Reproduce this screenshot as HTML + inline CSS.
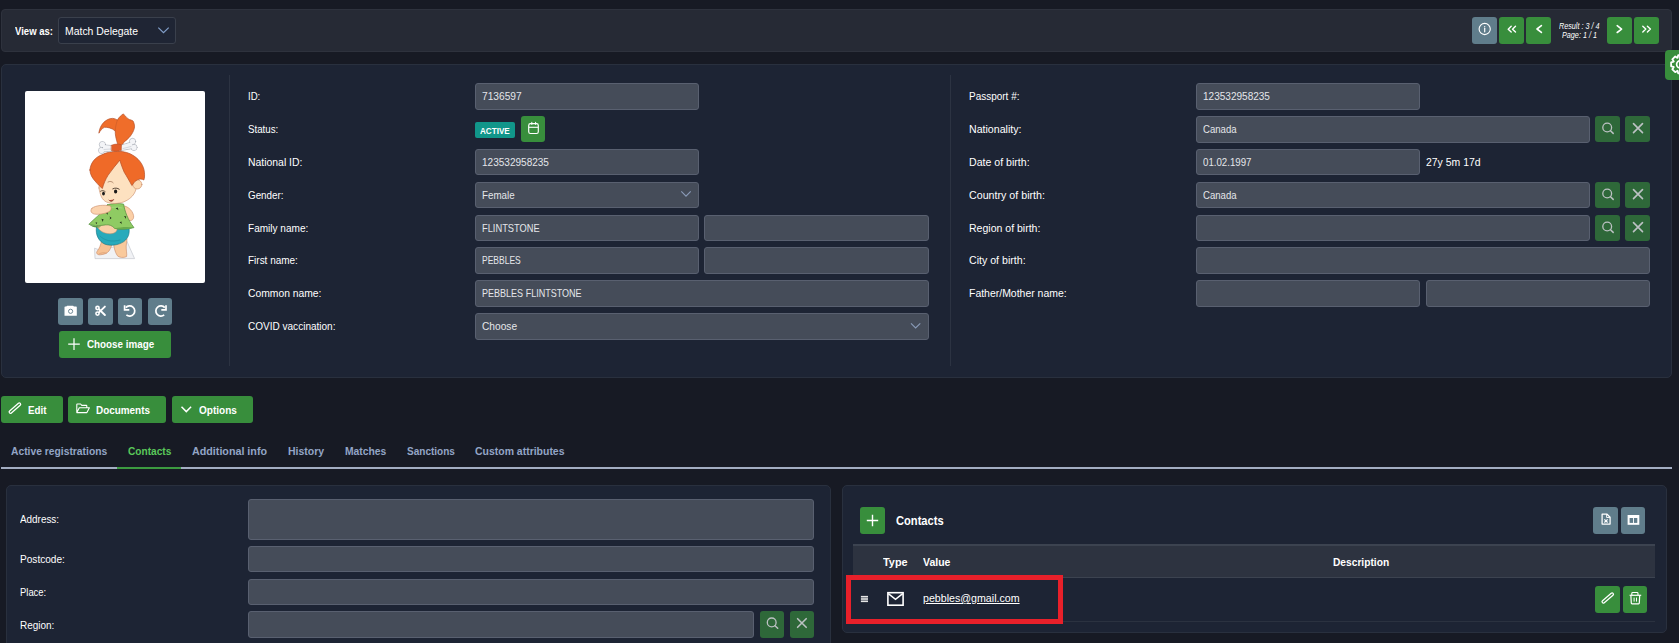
<!DOCTYPE html>
<html><head><meta charset="utf-8"><style>
html,body{margin:0;padding:0;width:1679px;height:643px;overflow:hidden;background:#171a24;font-family:"Liberation Sans",sans-serif;}
body>div,body>svg{position:absolute;}
.t{white-space:nowrap;}
</style></head><body>
<div style="left:1px;top:9px;width:1671px;height:43px;background:#262a35;border:1px solid #2e323d;border-radius:4px;box-sizing:border-box"></div>
<div class="t" style="left:15.00px;top:25px;font-size:11.34px;line-height:12px;font-weight:bold;color:#fff;transform:scaleX(0.8413);transform-origin:0 0;">View as:</div>
<div style="left:58px;top:17px;width:118px;height:27px;background:#1f2534;border:1px solid #3a404c;border-radius:3px;box-sizing:border-box"></div>
<div class="t" style="left:65.00px;top:25px;font-size:11.34px;line-height:12px;font-weight:normal;color:#fff;transform:scaleX(0.9206);transform-origin:0 0;">Match Delegate</div>
<svg style="left:157px;top:26px" width="13" height="9" viewBox="0 0 13 9"><path d="M1.3 1.6 L6.5 6.7 L11.7 1.6" stroke="#819ec9" stroke-width="1.2" fill="none"/></svg>
<div style="left:1472px;top:17px;width:25px;height:27px;background:#607d8b;border-radius:3px"></div>
<div style="left:1499px;top:17px;width:25px;height:27px;background:#388e3c;border-radius:3px"></div>
<div style="left:1526px;top:17px;width:25px;height:27px;background:#388e3c;border-radius:3px"></div>
<div style="left:1607px;top:17px;width:25px;height:27px;background:#388e3c;border-radius:3px"></div>
<div style="left:1634px;top:17px;width:25px;height:27px;background:#388e3c;border-radius:3px"></div>
<div class="t" style="left:1559.00px;top:21px;font-size:8.72px;line-height:10px;font-weight:normal;color:#fff;transform:scaleX(0.8272);transform-origin:0 0;font-style:italic">Result : 3 / 4</div>
<div class="t" style="left:1562.00px;top:30px;font-size:8.72px;line-height:10px;font-weight:normal;color:#fff;transform:scaleX(0.8297);transform-origin:0 0;font-style:italic">Page: 1 / 1</div>
<div style="left:1px;top:64px;width:1671px;height:314px;background:#1d2434;border:1px solid #29303e;border-radius:5px;box-sizing:border-box"></div>
<div style="left:25px;top:91px;width:180px;height:192px;background:#fff;border-radius:2px"></div>
<svg style="left:25px;top:91px" width="180" height="192" viewBox="25 91 180 192">
<g stroke-linejoin="round" stroke-linecap="round">
<!-- stand base -->
<path d="M94.6 248.5 L95 258.6 L134.6 258.6 L126.5 240.4 L118 246 L100 250 Z" fill="#f1f2f5" stroke="#c4c7cf" stroke-width="0.7"/>
<!-- legs -->
<path d="M101.5 240 C101 245 99.5 248 97 251.5 C95.8 253.2 97.5 255 100.2 254.8 C104 254.5 107 253.5 109 251 C111 248 112.5 244 112.5 240 Z" fill="#f7c193" stroke="#c98a66" stroke-width="0.6"/>
<path d="M113.5 241 C113.5 247 115 252 117.2 255.5 C118.8 257.8 124 258 126.6 256.6 C127.2 254 126 250 126.2 246 C126.4 243 127 241 127 239 Z" fill="#f9c99c" stroke="#c98a66" stroke-width="0.6"/>
<path d="M99 254 C101 252.5 104.5 252.5 106.5 253.2" stroke="#c98a66" stroke-width="0.5" fill="none"/>
<!-- diaper -->
<path d="M96.4 227.4 C95.3 235 98.8 241.5 105 244.2 C111 246.2 118.2 245.2 123.8 241.6 C128.3 238 129.8 234 129 227.5 C118 230 106 230 96.4 227.4 Z" fill="#28aabb" stroke="#17707f" stroke-width="0.6"/>
<path d="M100 236 C104 240.5 112 242.5 120 240" stroke="#1c8595" stroke-width="0.8" fill="none" opacity="0.6"/>
<!-- belly -->
<path d="M97 224.5 C97.5 229.8 103 233.6 110 233.8 C114.5 233.8 117.2 231.6 117.2 228.6 L114 223.5 L99 223 Z" fill="#fbd0a8" stroke="#c98a66" stroke-width="0.5"/>
<!-- right arm -->
<path d="M120.5 205.6 C126.8 205 132.4 209.8 133.6 215.6 C134.2 219.8 131 222 127.4 219.8 C124.8 216.2 122.4 213.2 119.8 210.6 Z" fill="#fbcfa6" stroke="#c98a66" stroke-width="0.6"/>
<!-- dress -->
<path d="M107.5 204.8 C112.5 203.3 119 203.1 123.6 204.1 C124.8 211.5 128 220 134 227.6 C127.5 229.6 120 229.8 114.6 228.4 C112.4 225.6 109 224.4 105.4 224.9 C101 225.6 96.4 226 92.8 225.2 C90.8 224.8 89.6 224.6 88.8 224.3 C92.5 220.5 96.8 217 100.5 213.5 C103.5 210.6 105.8 207.8 107.5 204.8 Z" fill="#8fcb63" stroke="#4c8838" stroke-width="0.65"/>
<path d="M88.8 224.3 C92.4 227.4 97.4 228.7 101.2 226.4 C96.6 226.4 92.4 225.8 88.8 224.3 Z" fill="#5a9a40"/>
<path d="M114.6 228.4 C119.6 229.8 127.4 229.8 134 227.6 C128 226.4 121 226.8 114.6 228.4 Z" fill="#6aab4c"/>
<path d="M109 208 C113 207 118 207 122 208" stroke="#a5d97e" stroke-width="1.2" fill="none" opacity="0.7"/>
<g fill="#1d2916">
<path d="M115.6 208.6 l2 -1.2 l0.9 2.8 l-1.4 -0.9 z"/>
<path d="M105.6 213 l2.2 -1 l-0.3 2.9 l-0.7 -1.3 z"/>
<path d="M101.4 218.8 l2.3 0.8 l-1.5 2.3 l0 -1.5 z"/>
<path d="M109.6 216.6 l2 1.5 l-2 1.4 l0.5 -1.4 z"/>
<path d="M124 216 l2.2 0.5 l-0.8 2.4 l-0.3 -1.5 z"/>
<path d="M119.6 222.2 l1.9 -0.8 l0 2.8 l-0.8 -1.2 z"/>
<path d="M95.5 222.4 l1.8 0.2 l-1 1.6 z"/>
</g>
<!-- left arm / hand -->
<path d="M92 208.2 C96 205 104 204.8 110 205.8 C112.2 207.8 111.2 211 108 212.2 C103 214.2 96 215 93 213.6 C90.4 212.2 90.4 209.6 92 208.2 Z" fill="#fbd3ae" stroke="#c98a66" stroke-width="0.6"/>
<!-- ponytail -->
<path d="M117.5 143.5 C116 139 115 134 115.3 131 C112 128 107 127 104.4 127.3 C102 128.5 100 131 98.9 133.2 C99.5 128 102 122.5 107.6 119.6 C111 117.8 114.5 118 117.4 120.1 C119 117 121.5 115 123.4 113.9 C125.5 116.5 127.5 118.5 129.4 119.6 C131 120 132.5 120.5 133.2 121.2 C134.5 124 134.8 126.5 134.3 128.3 C133.5 131.5 132 133.8 130.5 135.9 C128.5 138.5 126 140.5 124 142 L121 147 Z" fill="#ef6d2a" stroke="#b5502a" stroke-width="0.7"/>
<path d="M117.4 120.1 C116 124 115.3 128 115.3 131" stroke="#c85a28" stroke-width="0.6" fill="none"/>
<!-- face -->
<path d="M99 188 C98.5 178 104 166 119 160 C130 163 135.5 172 136.5 182 C137.5 191 133 198 124 201.8 C118 204 111.5 204 106.5 202 C102 200 100 195 99 188 Z" fill="#fde1c0" stroke="#c98a66" stroke-width="0.6"/>
<!-- ear -->
<circle cx="137.3" cy="184.4" r="4.6" fill="#fcd8b2" stroke="#c98a66" stroke-width="0.6"/>
<!-- hair -->
<path d="M89.9 170 C90.5 163 95 157.5 101.3 155 C106 152.5 112 151.3 117.7 151.3 C124 151.3 130 153 134 156 C140 160 143.8 166 144.4 172.2 C144.8 176 144.5 178.5 143.8 180 C142 178.8 139.5 178.8 137.5 179.8 C135.5 180.8 133.5 182.5 132.9 184.5 L131.8 185.5 C129.5 181 126.5 176 124.2 172.2 C122.5 168.5 121 164 119.8 160.2 C116 165 111.5 170 107.9 175.5 C105.5 179.5 103.5 184 102.4 188.5 C100 186.5 97.5 184 95.9 182 C92.5 178.5 90 174.5 89.9 170 Z" fill="#ef6a28" stroke="#b5502a" stroke-width="0.7"/>
<!-- bone -->
<g fill="#f3f4f7" stroke="#9ea3ad" stroke-width="0.6">
<circle cx="102.4" cy="144.6" r="3.1"/>
<circle cx="101.6" cy="150.4" r="3.1"/>
<circle cx="132.6" cy="141.4" r="3.1"/>
<circle cx="134.0" cy="147.4" r="3.1"/>
<path d="M103 144.8 L112 145.6 L112 151.2 L103 151.8 Z"/>
<path d="M121 145.2 L131.8 141.8 L133.2 148.4 L121 150.6 Z"/>
</g>
<path d="M103.5 145.3 L112 146.1 L112 150.7 L103.5 151.3 Z M121 145.7 L131.8 142.4 L133 147.8 L121 150.1 Z" fill="#f3f4f7"/>
<circle cx="102.4" cy="144.6" r="2.5" fill="#f3f4f7"/><circle cx="101.6" cy="150.4" r="2.5" fill="#f3f4f7"/><circle cx="132.6" cy="141.4" r="2.5" fill="#f3f4f7"/><circle cx="134.0" cy="147.4" r="2.5" fill="#f3f4f7"/>
<path d="M104 149.5 L111 149 M123 148.5 L131 146.5" stroke="#d5d8de" stroke-width="1" fill="none"/>
<path d="M111.5 145.2 C114.5 143.8 118.5 143.6 121.5 144.8 L121.3 150.3 C118 151.5 114.5 151.5 111.5 150.5 Z" fill="#e35f28" stroke="#b04a22" stroke-width="0.5"/>
<!-- eyes -->
<ellipse cx="103.5" cy="193.6" rx="1.4" ry="1.9" fill="#1a1a1a"/>
<ellipse cx="115.6" cy="191.4" rx="1.6" ry="2" fill="#1a1a1a"/>
<path d="M108 182 C110 181 112 181.3 113.2 182.8" stroke="#8a5a40" stroke-width="0.6" fill="none"/>
<path d="M112.8 188.8 C115 187.6 117.5 188 119.2 189.2" stroke="#2a1a10" stroke-width="0.8" fill="none"/>
<path d="M100.5 191.2 C102 190.2 104 190.6 105.2 191.6" stroke="#2a1a10" stroke-width="0.7" fill="none"/>
<!-- mouth -->
<path d="M109 200.2 C110.5 201.8 112.6 201.8 113.6 199.6" stroke="#7a3020" stroke-width="0.8" fill="#c05040"/>
</g>
</svg>

<div style="left:58px;top:298px;width:25px;height:27px;background:#607d8b;border-radius:3px"></div>
<div style="left:88px;top:298px;width:25px;height:27px;background:#607d8b;border-radius:3px"></div>
<div style="left:118px;top:298px;width:24px;height:27px;background:#607d8b;border-radius:3px"></div>
<div style="left:148px;top:298px;width:24px;height:27px;background:#607d8b;border-radius:3px"></div>
<div style="left:59px;top:331px;width:112px;height:27px;background:#388e3c;border-radius:3px"></div>
<div class="t" style="left:86.70px;top:338px;font-size:11.48px;line-height:12px;font-weight:bold;color:#fff;transform:scaleX(0.8575);transform-origin:0 0;">Choose image</div>
<div style="left:229px;top:75px;width:1px;height:291px;background:#2c3342"></div>
<div style="left:950px;top:75px;width:1px;height:291px;background:#2c3342"></div>
<div class="t" style="left:247.70px;top:89px;font-size:11.63px;line-height:13px;font-weight:normal;color:#fff;transform:scaleX(0.8277);transform-origin:0 0;">ID:</div>
<div class="t" style="left:247.70px;top:122px;font-size:11.63px;line-height:13px;font-weight:normal;color:#fff;transform:scaleX(0.8371);transform-origin:0 0;">Status:</div>
<div class="t" style="left:247.70px;top:155px;font-size:11.63px;line-height:13px;font-weight:normal;color:#fff;transform:scaleX(0.8954);transform-origin:0 0;">National ID:</div>
<div class="t" style="left:247.70px;top:188px;font-size:11.63px;line-height:13px;font-weight:normal;color:#fff;transform:scaleX(0.8450);transform-origin:0 0;">Gender:</div>
<div class="t" style="left:247.70px;top:221px;font-size:11.63px;line-height:13px;font-weight:normal;color:#fff;transform:scaleX(0.8640);transform-origin:0 0;">Family name:</div>
<div class="t" style="left:247.70px;top:253px;font-size:11.63px;line-height:13px;font-weight:normal;color:#fff;transform:scaleX(0.8581);transform-origin:0 0;">First name:</div>
<div class="t" style="left:247.70px;top:286px;font-size:11.63px;line-height:13px;font-weight:normal;color:#fff;transform:scaleX(0.8885);transform-origin:0 0;">Common name:</div>
<div class="t" style="left:247.70px;top:319px;font-size:11.63px;line-height:13px;font-weight:normal;color:#fff;transform:scaleX(0.8624);transform-origin:0 0;">COVID vaccination:</div>
<div style="left:475px;top:83.1px;width:224px;height:26.599999999999994px;background:#454c59;border:1px solid #596070;border-radius:3px;box-sizing:border-box"></div>
<div class="t" style="left:481.50px;top:90px;font-size:11.34px;line-height:12px;font-weight:normal;color:#e4e6ea;transform:scaleX(0.8995);transform-origin:0 0;">7136597</div>
<div style="left:475px;top:122px;width:40px;height:16px;background:#11968a;border-radius:2px"></div>
<div class="t" style="left:480.00px;top:127px;font-size:8.28px;line-height:9px;font-weight:bold;color:#fff;transform:scaleX(0.9809);transform-origin:0 0;">ACTIVE</div>
<div style="left:521px;top:116px;width:24px;height:26px;background:#388e3c;border-radius:3px"></div>
<div style="left:475px;top:148.82px;width:224px;height:26.599999999999994px;background:#454c59;border:1px solid #596070;border-radius:3px;box-sizing:border-box"></div>
<div class="t" style="left:481.50px;top:156px;font-size:11.34px;line-height:12px;font-weight:normal;color:#e4e6ea;transform:scaleX(0.8855);transform-origin:0 0;">123532958235</div>
<div style="left:475px;top:181.68px;width:224px;height:26.599999999999994px;background:#454c59;border:1px solid #596070;border-radius:3px;box-sizing:border-box"></div>
<div class="t" style="left:481.50px;top:189px;font-size:11.34px;line-height:12px;font-weight:normal;color:#e4e6ea;transform:scaleX(0.8622);transform-origin:0 0;">Female</div>
<div style="left:475px;top:214.54px;width:224px;height:26.599999999999994px;background:#454c59;border:1px solid #596070;border-radius:3px;box-sizing:border-box"></div>
<div class="t" style="left:481.50px;top:222px;font-size:11.34px;line-height:12px;font-weight:normal;color:#e4e6ea;transform:scaleX(0.8202);transform-origin:0 0;">FLINTSTONE</div>
<div style="left:704px;top:214.54px;width:225px;height:26.599999999999994px;background:#454c59;border:1px solid #596070;border-radius:3px;box-sizing:border-box"></div>
<div style="left:475px;top:247.4px;width:224px;height:26.599999999999994px;background:#454c59;border:1px solid #596070;border-radius:3px;box-sizing:border-box"></div>
<div class="t" style="left:481.50px;top:254px;font-size:11.34px;line-height:12px;font-weight:normal;color:#e4e6ea;transform:scaleX(0.7508);transform-origin:0 0;">PEBBLES</div>
<div style="left:704px;top:247.4px;width:225px;height:26.599999999999994px;background:#454c59;border:1px solid #596070;border-radius:3px;box-sizing:border-box"></div>
<div style="left:475px;top:280.26px;width:454px;height:26.600000000000023px;background:#454c59;border:1px solid #596070;border-radius:3px;box-sizing:border-box"></div>
<div class="t" style="left:481.50px;top:287px;font-size:11.34px;line-height:12px;font-weight:normal;color:#e4e6ea;transform:scaleX(0.7965);transform-origin:0 0;">PEBBLES FLINTSTONE</div>
<div style="left:475px;top:313.12px;width:454px;height:26.600000000000023px;background:#454c59;border:1px solid #596070;border-radius:3px;box-sizing:border-box"></div>
<div class="t" style="left:481.50px;top:320px;font-size:11.34px;line-height:12px;font-weight:normal;color:#e4e6ea;transform:scaleX(0.8982);transform-origin:0 0;">Choose</div>
<div class="t" style="left:968.80px;top:89px;font-size:11.63px;line-height:13px;font-weight:normal;color:#fff;transform:scaleX(0.8586);transform-origin:0 0;">Passport #:</div>
<div class="t" style="left:968.80px;top:122px;font-size:11.63px;line-height:13px;font-weight:normal;color:#fff;transform:scaleX(0.9127);transform-origin:0 0;">Nationality:</div>
<div class="t" style="left:968.80px;top:155px;font-size:11.63px;line-height:13px;font-weight:normal;color:#fff;transform:scaleX(0.9103);transform-origin:0 0;">Date of birth:</div>
<div class="t" style="left:968.80px;top:188px;font-size:11.63px;line-height:13px;font-weight:normal;color:#fff;transform:scaleX(0.9188);transform-origin:0 0;">Country of birth:</div>
<div class="t" style="left:968.80px;top:221px;font-size:11.63px;line-height:13px;font-weight:normal;color:#fff;transform:scaleX(0.9054);transform-origin:0 0;">Region of birth:</div>
<div class="t" style="left:968.80px;top:253px;font-size:11.63px;line-height:13px;font-weight:normal;color:#fff;transform:scaleX(0.9124);transform-origin:0 0;">City of birth:</div>
<div class="t" style="left:968.80px;top:286px;font-size:11.63px;line-height:13px;font-weight:normal;color:#fff;transform:scaleX(0.8999);transform-origin:0 0;">Father/Mother name:</div>
<div style="left:1196px;top:83.1px;width:224px;height:26.599999999999994px;background:#454c59;border:1px solid #596070;border-radius:3px;box-sizing:border-box"></div>
<div class="t" style="left:1203.10px;top:90px;font-size:11.34px;line-height:12px;font-weight:normal;color:#e4e6ea;transform:scaleX(0.8855);transform-origin:0 0;">123532958235</div>
<div style="left:1196px;top:115.96px;width:394px;height:26.60000000000001px;background:#454c59;border:1px solid #596070;border-radius:3px;box-sizing:border-box"></div>
<div class="t" style="left:1203.10px;top:123px;font-size:11.34px;line-height:12px;font-weight:normal;color:#e4e6ea;transform:scaleX(0.8458);transform-origin:0 0;">Canada</div>
<div style="left:1595px;top:115.96px;width:25px;height:26.299999999999997px;background:#388e3c;border-radius:3px;opacity:0.65"></div>
<div style="left:1625px;top:115.96px;width:25px;height:26.299999999999997px;background:#388e3c;border-radius:3px;opacity:0.65"></div>
<div style="left:1196px;top:148.82px;width:224px;height:26.599999999999994px;background:#454c59;border:1px solid #596070;border-radius:3px;box-sizing:border-box"></div>
<div class="t" style="left:1203.10px;top:156px;font-size:11.34px;line-height:12px;font-weight:normal;color:#e4e6ea;transform:scaleX(0.8547);transform-origin:0 0;">01.02.1997</div>
<div class="t" style="left:1425.60px;top:155px;font-size:11.63px;line-height:13px;font-weight:normal;color:#fff;transform:scaleX(0.8985);transform-origin:0 0;">27y 5m 17d</div>
<div style="left:1196px;top:181.68px;width:394px;height:26.599999999999994px;background:#454c59;border:1px solid #596070;border-radius:3px;box-sizing:border-box"></div>
<div class="t" style="left:1203.10px;top:189px;font-size:11.34px;line-height:12px;font-weight:normal;color:#e4e6ea;transform:scaleX(0.8458);transform-origin:0 0;">Canada</div>
<div style="left:1595px;top:181.68px;width:25px;height:26.30000000000001px;background:#388e3c;border-radius:3px;opacity:0.65"></div>
<div style="left:1625px;top:181.68px;width:25px;height:26.30000000000001px;background:#388e3c;border-radius:3px;opacity:0.65"></div>
<div style="left:1196px;top:214.54px;width:394px;height:26.599999999999994px;background:#454c59;border:1px solid #596070;border-radius:3px;box-sizing:border-box"></div>
<div style="left:1595px;top:214.54px;width:25px;height:26.30000000000001px;background:#388e3c;border-radius:3px;opacity:0.65"></div>
<div style="left:1625px;top:214.54px;width:25px;height:26.30000000000001px;background:#388e3c;border-radius:3px;opacity:0.65"></div>
<div style="left:1196px;top:247.4px;width:454px;height:26.599999999999994px;background:#454c59;border:1px solid #596070;border-radius:3px;box-sizing:border-box"></div>
<div style="left:1196px;top:280.26px;width:224px;height:26.600000000000023px;background:#454c59;border:1px solid #596070;border-radius:3px;box-sizing:border-box"></div>
<div style="left:1426px;top:280.26px;width:224px;height:26.600000000000023px;background:#454c59;border:1px solid #596070;border-radius:3px;box-sizing:border-box"></div>
<div style="left:1px;top:396px;width:62px;height:27px;background:#388e3c;border-radius:3px"></div>
<div class="t" style="left:28.20px;top:404px;font-size:11.19px;line-height:12px;font-weight:bold;color:#fff;transform:scaleX(0.8751);transform-origin:0 0;">Edit</div>
<div style="left:68px;top:396px;width:98px;height:27px;background:#388e3c;border-radius:3px"></div>
<div class="t" style="left:95.90px;top:404px;font-size:10.90px;line-height:12px;font-weight:bold;color:#fff;transform:scaleX(0.9098);transform-origin:0 0;">Documents</div>
<div style="left:172px;top:396px;width:81px;height:27px;background:#388e3c;border-radius:3px"></div>
<div class="t" style="left:198.70px;top:404px;font-size:10.90px;line-height:12px;font-weight:bold;color:#fff;transform:scaleX(0.9205);transform-origin:0 0;">Options</div>
<div style="left:1px;top:467px;width:1671px;height:2px;background:#a3adc2"></div>
<div style="left:117px;top:467px;width:64px;height:2px;background:#3c9a40"></div>
<div class="t" style="left:11.20px;top:445px;font-size:11.05px;line-height:12px;font-weight:bold;color:#93a5c6;transform:scaleX(0.9328);transform-origin:0 0;">Active registrations</div>
<div class="t" style="left:127.80px;top:445px;font-size:11.05px;line-height:12px;font-weight:bold;color:#5ac85a;transform:scaleX(0.9163);transform-origin:0 0;">Contacts</div>
<div class="t" style="left:191.90px;top:445px;font-size:11.05px;line-height:12px;font-weight:bold;color:#93a5c6;transform:scaleX(0.9701);transform-origin:0 0;">Additional info</div>
<div class="t" style="left:287.60px;top:445px;font-size:11.05px;line-height:12px;font-weight:bold;color:#93a5c6;transform:scaleX(0.9512);transform-origin:0 0;">History</div>
<div class="t" style="left:345.10px;top:445px;font-size:11.05px;line-height:12px;font-weight:bold;color:#93a5c6;transform:scaleX(0.9342);transform-origin:0 0;">Matches</div>
<div class="t" style="left:406.90px;top:445px;font-size:11.05px;line-height:12px;font-weight:bold;color:#93a5c6;transform:scaleX(0.9073);transform-origin:0 0;">Sanctions</div>
<div class="t" style="left:475.00px;top:445px;font-size:11.05px;line-height:12px;font-weight:bold;color:#93a5c6;transform:scaleX(0.9470);transform-origin:0 0;">Custom attributes</div>
<div style="left:6px;top:485px;width:825px;height:215px;background:#1d2434;border:1px solid #29303e;border-radius:5px;box-sizing:border-box"></div>
<div class="t" style="left:20.20px;top:513px;font-size:11.34px;line-height:12px;font-weight:normal;color:#fff;transform:scaleX(0.8740);transform-origin:0 0;">Address:</div>
<div class="t" style="left:20.20px;top:553px;font-size:11.34px;line-height:12px;font-weight:normal;color:#fff;transform:scaleX(0.8906);transform-origin:0 0;">Postcode:</div>
<div class="t" style="left:20.20px;top:586px;font-size:11.34px;line-height:12px;font-weight:normal;color:#fff;transform:scaleX(0.8316);transform-origin:0 0;">Place:</div>
<div class="t" style="left:20.20px;top:619px;font-size:11.34px;line-height:12px;font-weight:normal;color:#fff;transform:scaleX(0.8803);transform-origin:0 0;">Region:</div>
<div style="left:248px;top:499px;width:566px;height:40.5px;background:#454c59;border:1px solid #596070;border-radius:3px;box-sizing:border-box"></div>
<div style="left:248px;top:546px;width:566px;height:25.5px;background:#454c59;border:1px solid #596070;border-radius:3px;box-sizing:border-box"></div>
<div style="left:248px;top:579px;width:566px;height:25.5px;background:#454c59;border:1px solid #596070;border-radius:3px;box-sizing:border-box"></div>
<div style="left:248px;top:611px;width:506px;height:26.600000000000023px;background:#454c59;border:1px solid #596070;border-radius:3px;box-sizing:border-box"></div>
<div style="left:760px;top:611px;width:24px;height:26.600000000000023px;background:#388e3c;border-radius:3px;opacity:0.65"></div>
<div style="left:790px;top:611px;width:24px;height:26.600000000000023px;background:#388e3c;border-radius:3px;opacity:0.65"></div>
<div style="left:842px;top:485px;width:824.5px;height:148px;background:#1d2434;border:1px solid #29303e;border-radius:5px;box-sizing:border-box"></div>
<div style="left:860px;top:507px;width:25px;height:27px;background:#388e3c;border-radius:3px"></div>
<div class="t" style="left:895.70px;top:514px;font-size:12.35px;line-height:14px;font-weight:bold;color:#fff;transform:scaleX(0.9025);transform-origin:0 0;">Contacts</div>
<div style="left:1593px;top:507px;width:25px;height:27px;background:#607d8b;border-radius:3px"></div>
<div style="left:1621px;top:507px;width:24px;height:27px;background:#607d8b;border-radius:3px"></div>
<div style="left:853px;top:544px;width:802px;height:34px;background:#2d3340;border-top:2px solid #3c4350;border-bottom:1px solid #3c4350;box-sizing:border-box"></div>
<div class="t" style="left:883.20px;top:555px;font-size:11.70px;line-height:13px;font-weight:bold;color:#fff;transform:scaleX(0.9303);transform-origin:0 0;">Type</div>
<div class="t" style="left:922.50px;top:555px;font-size:11.70px;line-height:13px;font-weight:bold;color:#fff;transform:scaleX(0.8962);transform-origin:0 0;">Value</div>
<div class="t" style="left:1332.80px;top:555px;font-size:11.70px;line-height:13px;font-weight:bold;color:#fff;transform:scaleX(0.8731);transform-origin:0 0;">Description</div>
<div style="left:853px;top:621px;width:802px;height:1px;background:#2b3240"></div>
<div class="t" style="left:923.20px;top:592px;font-size:11.48px;line-height:12px;font-weight:normal;color:#fff;transform:scaleX(0.9280);transform-origin:0 0;text-decoration:underline">pebbles@gmail.com</div>
<div style="left:1595px;top:586px;width:25px;height:27px;background:#388e3c;border-radius:3px"></div>
<div style="left:1623px;top:586px;width:24px;height:27px;background:#388e3c;border-radius:3px"></div>
<div style="left:846px;top:575px;width:217px;height:49px;border:5px solid #e8202a;box-sizing:border-box"></div>
<svg style="left:1472px;top:17px" width="25" height="27" viewBox="1472 17 25 27"><circle cx="1484.7" cy="29" r="5.6" stroke="#fff" fill="none" stroke-linecap="round" stroke-linejoin="round" stroke-width="1.1"/><path d="M1484.7 28.2 L1484.7 31.8" stroke="#fff" fill="none" stroke-linecap="round" stroke-linejoin="round" stroke-width="1.2" stroke-linecap="butt"/><circle cx="1484.7" cy="26.6" r="0.65" fill="#fff"/></svg>
<svg style="left:1499px;top:17px" width="25" height="27" viewBox="1499 17 25 27"><path d="M1511.2 26.3 L1508.2 29.2 L1511.2 32.1" stroke="#fff" fill="none" stroke-linecap="round" stroke-linejoin="round" stroke-width="1.4" stroke-linecap="butt" stroke-linejoin="miter"/><path d="M1515.5 26.3 L1512.5 29.2 L1515.5 32.1" stroke="#fff" fill="none" stroke-linecap="round" stroke-linejoin="round" stroke-width="1.4" stroke-linecap="butt" stroke-linejoin="miter"/></svg>
<svg style="left:1526px;top:17px" width="25" height="27" viewBox="1526 17 25 27"><path d="M1541.4 25.6 L1537.0 29.0 L1541.4 32.4" stroke="#fff" fill="none" stroke-linecap="round" stroke-linejoin="round" stroke-width="1.6" stroke-linecap="butt" stroke-linejoin="miter"/></svg>
<svg style="left:1607px;top:17px" width="25" height="27" viewBox="1607 17 25 27"><path d="M1617.1999999999998 25.700000000000003 L1621.6 29.1 L1617.1999999999998 32.5" stroke="#fff" fill="none" stroke-linecap="round" stroke-linejoin="round" stroke-width="1.6" stroke-linecap="butt" stroke-linejoin="miter"/></svg>
<svg style="left:1634px;top:17px" width="25" height="27" viewBox="1634 17 25 27"><path d="M1642.8 26.200000000000003 L1645.8 29.1 L1642.8 32.0" stroke="#fff" fill="none" stroke-linecap="round" stroke-linejoin="round" stroke-width="1.4" stroke-linecap="butt" stroke-linejoin="miter"/><path d="M1647.4 26.200000000000003 L1650.4 29.1 L1647.4 32.0" stroke="#fff" fill="none" stroke-linecap="round" stroke-linejoin="round" stroke-width="1.4" stroke-linecap="butt" stroke-linejoin="miter"/></svg>
<div style="left:1665px;top:50px;width:25px;height:30px;background:#388e3c;border-radius:4px"></div>
<svg style="left:1665px;top:50px" width="14" height="30" viewBox="1665 50 14 30"><path d="M1673.70 66.90 L1671.12 66.33 L1671.12 62.27 L1673.70 61.70 L1673.77 61.54 L1672.35 59.32 L1675.22 56.45 L1677.44 57.87 L1677.60 57.80 L1678.17 55.22 L1682.23 55.22 L1682.80 57.80 L1682.96 57.87 L1685.18 56.45 L1688.05 59.32 L1686.63 61.54 L1686.70 61.70 L1689.28 62.27 L1689.28 66.33 L1686.70 66.90 L1686.63 67.06 L1688.05 69.28 L1685.18 72.15 L1682.96 70.73 L1682.80 70.80 L1682.23 73.38 L1678.17 73.38 L1677.60 70.80 L1677.44 70.73 L1675.22 72.15 L1672.35 69.28 L1673.77 67.06 Z" stroke="#fff" stroke-width="1.8" fill="none" stroke-linejoin="round"/><circle cx="1680.2" cy="64.3" r="3.6" stroke="#fff" stroke-width="1.7" fill="none"/></svg>
<svg style="left:58px;top:298px" width="25" height="27" viewBox="58 298 25 27"><path d="M64.5 307.3 Q64.5 306.6 65.2 306.6 L66.3 306.6 L67.1 305.7 L73.1 305.7 L73.9 306.6 L76.1 306.6 Q76.8 306.6 76.8 307.3 L76.8 315.7 L64.5 315.7 Z" fill="#fff"/><circle cx="70.6" cy="311.3" r="2.1" fill="#fff" stroke="#607d8b" stroke-width="0.9"/></svg>
<svg style="left:88px;top:298px" width="25" height="27" viewBox="88 298 25 27"><circle cx="97.5" cy="308.0" r="1.6" stroke="#fff" stroke-width="1.6" fill="none"/><circle cx="97.5" cy="313.6" r="1.6" stroke="#fff" stroke-width="1.6" fill="none"/><path d="M99.2 309.5 L104.9 315.0 M99.2 312.1 L104.9 306.6" stroke="#fff" stroke-width="1.9" stroke-linecap="round"/></svg>
<svg style="left:118px;top:298px" width="24" height="27" viewBox="118 298 24 27"><path d="M125.8 307.6 A5.1 5.1 0 1 1 126.4 314.9" stroke="#fff" stroke-width="1.7" fill="none"/><path d="M124.6 305.2 L124.6 309.8 L129.3 309.8" stroke="#fff" stroke-width="1.7" fill="none" stroke-linejoin="miter"/></svg>
<svg style="left:148px;top:298px" width="24" height="27" viewBox="148 298 24 27"><path d="M164.8 307.6 A5.1 5.1 0 1 0 164.2 314.9" stroke="#fff" stroke-width="1.7" fill="none"/><path d="M166.0 305.2 L166.0 309.8 L161.3 309.8" stroke="#fff" stroke-width="1.7" fill="none" stroke-linejoin="miter"/></svg>
<svg style="left:59px;top:331px" width="112" height="27" viewBox="59 331 112 27"><path d="M68.2 344.2 L79.8 344.2 M74 338.3 L74 350" stroke="#fff" stroke-width="1.2"/></svg>
<svg style="left:521px;top:116px" width="24" height="26" viewBox="521 116 24 26"><rect x="528.7" y="123.6" width="9.6" height="9.9" rx="1.8" stroke="#fff" stroke-width="1.15" fill="none"/><path d="M528.7 127.3 L538.3 127.3" stroke="#fff" stroke-width="1.1"/><path d="M531.8 121.9 L531.8 124.8 M535.6 121.9 L535.6 124.8" stroke="#fff" stroke-width="1.0"/></svg>
<svg style="left:676px;top:185px" width="20" height="20" viewBox="676 185 20 20"><path d="M681.3 191.3 L686 196.2 L690.7 191.3" stroke="#8a9bb8" stroke-width="1.1" fill="none"/></svg>
<svg style="left:905px;top:316px" width="20" height="20" viewBox="905 316 20 20"><path d="M911 323.3 L915.6 328 L920.3 323.3" stroke="#8a9bb8" stroke-width="1.1" fill="none"/></svg>
<svg style="left:1595px;top:115.96px" width="55" height="26.999999999999986" viewBox="1595 115.96 55 26.999999999999986"><circle cx="1607.2" cy="127.46" r="4.4" stroke="#bcc1c3" stroke-width="1.3" fill="none"/><path d="M1610.5 130.76 L1613.2 133.35999999999999" stroke="#bcc1c3" stroke-width="1.5" stroke-linecap="round"/><path d="M1633.5 123.56 L1642.5 132.56 M1642.5 123.56 L1633.5 132.56" stroke="#bcc1c3" stroke-width="1.6" stroke-linecap="round"/></svg>
<svg style="left:1595px;top:181.68px" width="55" height="27.0" viewBox="1595 181.68 55 27.0"><circle cx="1607.2" cy="193.18" r="4.4" stroke="#bcc1c3" stroke-width="1.3" fill="none"/><path d="M1610.5 196.48000000000002 L1613.2 199.08" stroke="#bcc1c3" stroke-width="1.5" stroke-linecap="round"/><path d="M1633.5 189.28 L1642.5 198.28 M1642.5 189.28 L1633.5 198.28" stroke="#bcc1c3" stroke-width="1.6" stroke-linecap="round"/></svg>
<svg style="left:1595px;top:214.54px" width="55" height="27.0" viewBox="1595 214.54 55 27.0"><circle cx="1607.2" cy="226.04" r="4.4" stroke="#bcc1c3" stroke-width="1.3" fill="none"/><path d="M1610.5 229.34 L1613.2 231.94" stroke="#bcc1c3" stroke-width="1.5" stroke-linecap="round"/><path d="M1633.5 222.14 L1642.5 231.14 M1642.5 222.14 L1633.5 231.14" stroke="#bcc1c3" stroke-width="1.6" stroke-linecap="round"/></svg>
<svg style="left:760px;top:611px" width="54" height="27" viewBox="760 611 54 27"><circle cx="771.7" cy="622.4" r="4.4" stroke="#bcc1c3" stroke-width="1.3" fill="none"/><path d="M775.0 625.6999999999999 L777.7 628.3" stroke="#bcc1c3" stroke-width="1.5" stroke-linecap="round"/><path d="M797.6 618.7 L806.1999999999999 627.3 M806.1999999999999 618.7 L797.6 627.3" stroke="#bcc1c3" stroke-width="1.6" stroke-linecap="round"/></svg>
<svg style="left:1px;top:396px" width="62" height="27" viewBox="1 396 62 27"><path d="M10.5 412 L19.3 404.2" stroke="#fff" stroke-width="3.9" stroke-linecap="round"/><path d="M10.5 412 L19.3 404.2" stroke="#388e3c" stroke-width="1.4" stroke-linecap="round"/></svg>
<svg style="left:68px;top:396px" width="98" height="27" viewBox="68 396 98 27"><path d="M76.8 412.6 L76.8 404.5 Q76.8 404 77.3 404 L80.6 404 L81.8 405.4 L86.3 405.4 Q86.8 405.4 86.8 405.9 L86.8 407.6 M76.8 412.6 L79.3 407.7 L89.4 407.7 L86.9 412.6 Z" stroke="#fff" stroke-width="1.1" fill="none" stroke-linejoin="round"/></svg>
<svg style="left:172px;top:396px" width="81" height="27" viewBox="172 396 81 27"><path d="M181.5 406.8 L186.3 411.6 L191.1 406.8" stroke="#fff" stroke-width="1.5" fill="none"/></svg>
<svg style="left:860px;top:507px" width="25" height="27" viewBox="860 507 25 27"><path d="M866.8 520.5 L878.2 520.5 M872.5 514.8 L872.5 526.2" stroke="#fff" stroke-width="1.4"/></svg>
<svg style="left:1593px;top:507px" width="25" height="27" viewBox="1593 507 25 27"><path d="M1602.1 514.0 L1606.8 514.0 L1610.1 517.3 L1610.1 524.1 L1602.1 524.1 Z" stroke="#fff" stroke-width="1.25" fill="none" stroke-linejoin="round"/><path d="M1606.6 514.2 L1606.6 517.5 L1609.9 517.5" stroke="#fff" stroke-width="0.9" fill="none"/><path d="M1604.4 519.3 L1607.6 522.5 M1607.6 519.3 L1604.4 522.5" stroke="#fff" stroke-width="1.15"/></svg>
<svg style="left:1621px;top:507px" width="24" height="27" viewBox="1621 507 24 27"><rect x="1627.6" y="515" width="11.7" height="9.8" fill="#fff"/><rect x="1629.6" y="518" width="3.4" height="4.9" fill="#607d8b"/><rect x="1633.9" y="518" width="3.4" height="4.9" fill="#607d8b"/></svg>
<svg style="left:858px;top:592px" width="14" height="14" viewBox="858 592 14 14"><rect x="860.9" y="595.9" width="7.1" height="1.6" fill="#e6e6e6"/><rect x="860.9" y="598.2" width="7.1" height="1.6" fill="#e6e6e6"/><rect x="860.9" y="600.5" width="7.1" height="1.6" fill="#e6e6e6"/></svg>
<svg style="left:885px;top:589px" width="22" height="20" viewBox="885 589 22 20"><rect x="887.9" y="592.7" width="15.2" height="12.5" stroke="#fff" stroke-width="1.6" fill="none"/><path d="M888.3 593.6 L895.5 599.4 L902.7 593.6" stroke="#fff" stroke-width="1.5" fill="none"/></svg>
<svg style="left:1595px;top:586px" width="25" height="27" viewBox="1595 586 25 27"><path d="M1603.4 601.8 L1612.1 594.2" stroke="#fff" stroke-width="3.9" stroke-linecap="round"/><path d="M1603.4 601.8 L1612.1 594.2" stroke="#388e3c" stroke-width="1.4" stroke-linecap="round"/></svg>
<svg style="left:1623px;top:586px" width="24" height="27" viewBox="1623 586 24 27"><path d="M1629.6 595.3 L1641.2 595.3" stroke="#fff" stroke-width="1.2"/><path d="M1631.8 595 L1631.8 593.4 Q1631.8 592.5 1632.7 592.5 L1637.1 592.5 Q1638 592.5 1638 593.4 L1638 595" stroke="#fff" stroke-width="1.1" fill="none"/><path d="M1630.9 595.5 L1631.3 603.2 Q1631.4 603.8 1632 603.8 L1638.6 603.8 Q1639.2 603.8 1639.3 603.2 L1639.7 595.5" stroke="#fff" stroke-width="1.2" fill="none"/><path d="M1634.1 597.6 L1634.1 601.6 M1636.5 597.6 L1636.5 601.6" stroke="#fff" stroke-width="1"/></svg>
</body></html>
